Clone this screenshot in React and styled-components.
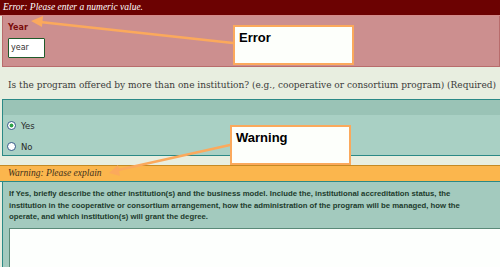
import React from "react";
import styled, { createGlobalStyle } from "styled-components";

const Global = createGlobalStyle`
  html, body {
    margin: 0;
    padding: 0;
    background: #e8eee0;
    overflow: hidden;
  }
`;

const Page = styled.div`
  position: relative;
  width: 500px;
  height: 267px;
  overflow: hidden;
  background: #e8eee0;
`;

const ErrorBar = styled.div`
  height: 15px;
  background: #6c0202;
  border-bottom: 1px solid #d48a8a;
  color: #fff;
  font-family: "Liberation Serif", serif;
  font-style: italic;
  font-size: 9.5px;
  line-height: 15px;
  padding-left: 3px;
`;

const ErrorField = styled.div`
  margin-left: 2px;
  height: 51px;
  background: #cc8f8f;
  border: 1px solid #b86c6c;
  border-top: none;
  padding: 7px 0 0 5px;
  box-sizing: border-box;
`;

const FieldLabel = styled.div`
  font-family: "DejaVu Sans", sans-serif;
  font-weight: bold;
  font-size: 8px;
  color: #7a0c0c;
  line-height: 10px;
`;

const TextInput = styled.div`
  margin-top: 5px;
  width: 37px;
  height: 20px;
  box-sizing: border-box;
  background: #fff;
  border: 1px solid #1f5a2a;
  border-radius: 1px;
  font-family: "DejaVu Sans", sans-serif;
  font-size: 8px;
  color: #333;
  padding-left: 2px;
  line-height: 18px;
`;

const Question = styled.div`
  padding: 12px 0 0 8px;
  height: 32px;
  box-sizing: border-box;
  font-family: "DejaVu Serif", serif;
  font-size: 9px;
  color: #3a3a3a;
  white-space: nowrap;
  line-height: 12px;
`;

const RadioPanel = styled.div`
  margin-left: 2px;
  height: 57px;
  background: #a9d0c4;
  border: 1px solid #2b8986;
  border-right: none;
  box-sizing: border-box;
`;

const PanelBand = styled.div`
  height: 15px;
  background: #9ac3b6;
`;

const RadioRow = styled.div`
  display: flex;
  align-items: center;
  gap: 5px;
  height: 21px;
  padding-left: 4px;
  font-family: "DejaVu Sans", sans-serif;
  font-size: 8.5px;
  color: #2a2a2a;
`;

const RadioDot = styled.span`
  width: 9px;
  height: 9px;
  border-radius: 50%;
  border: 1px solid #3b5c8c;
  background: radial-gradient(circle, ${(p) => (p.$on ? "#2ea34a 0 1.6px, #fff 2.3px" : "#fff 0")});
  box-sizing: border-box;
`;

const Spacer = styled.div`
  height: ${(p) => p.$h}px;
`;

const WarningBar = styled.div`
  height: 17px;
  box-sizing: border-box;
  background: #fbb64d;
  border-top: 1px solid #c48a24;
  border-bottom: 1px solid #2b8986;
  color: #40301a;
  font-family: "Liberation Serif", serif;
  font-style: italic;
  font-size: 9.5px;
  line-height: 15px;
  padding-left: 8px;
`;

const DescPanel = styled.div`
  margin-left: 2px;
  height: 90px;
  background: #a3cabe;
  border-left: 1px solid #2b8986;
  padding: 6px 0 0 6px;
  box-sizing: border-box;
`;

const DescText = styled.div`
  font-family: "Liberation Sans", sans-serif;
  font-weight: bold;
  font-size: 7.75px;
  line-height: 11.5px;
  color: #1d3b2c;
  white-space: nowrap;
`;

const TextArea = styled.div`
  margin-top: 5px;
  height: 60px;
  background: #fdfffd;
  border-top: 1px solid #5a8a78;
  border-left: 1px solid #5a8a78;
`;

const Callout = styled.div`
  position: absolute;
  left: ${(p) => p.$x}px;
  top: ${(p) => p.$y}px;
  width: ${(p) => p.$w}px;
  height: ${(p) => p.$h}px;
  box-sizing: border-box;
  background: #fdfffb;
  border: 2px solid #fba95c;
  padding: 3px 0 0 4px;
  font-family: "Liberation Sans", sans-serif;
  font-weight: bold;
  font-size: 13px;
  color: #000;
`;

const Arrows = styled.svg`
  position: absolute;
  left: 0;
  top: 0;
  pointer-events: none;
`;

export default function App() {
  return (
    <Page>
      <Global />
      <ErrorBar>Error: Please enter a numeric value.</ErrorBar>
      <ErrorField>
        <FieldLabel>Year</FieldLabel>
        <TextInput>year</TextInput>
      </ErrorField>
      <Question>
        Is the program offered by more than one institution? (e.g., cooperative or consortium program) (Required)
      </Question>
      <RadioPanel>
        <PanelBand />
        <RadioRow>
          <RadioDot $on /> Yes
        </RadioRow>
        <RadioRow>
          <RadioDot /> No
        </RadioRow>
      </RadioPanel>
      <Spacer $h={9} />
      <WarningBar>Warning: Please explain</WarningBar>
      <DescPanel>
        <DescText>
          If Yes, briefly describe the other institution(s) and the business model. Include the, institutional accreditation status, the
          <br />
          institution in the cooperative or consortium arrangement, how the administration of the program will be managed, how the
          <br />
          operate, and which institution(s) will grant the degree.
        </DescText>
        <TextArea />
      </DescPanel>

      <Callout $x={233} $y={25} $w={121} $h={40}>Error</Callout>
      <Callout $x={230} $y={125} $w={121} $h={40}>Warning</Callout>

      <Arrows width="500" height="267" viewBox="0 0 500 267">
        <g stroke="#fba95c" strokeWidth="2.5" fill="#fba95c" strokeLinecap="round">
          <line x1="233" y1="43" x2="40" y2="22" />
          <polygon points="31,21 43,16 42,27" stroke="none" />
          <line x1="230" y1="145" x2="118" y2="170" />
          <polygon points="109,173 118,165 120,176" stroke="none" />
        </g>
      </Arrows>
    </Page>
  );
}
